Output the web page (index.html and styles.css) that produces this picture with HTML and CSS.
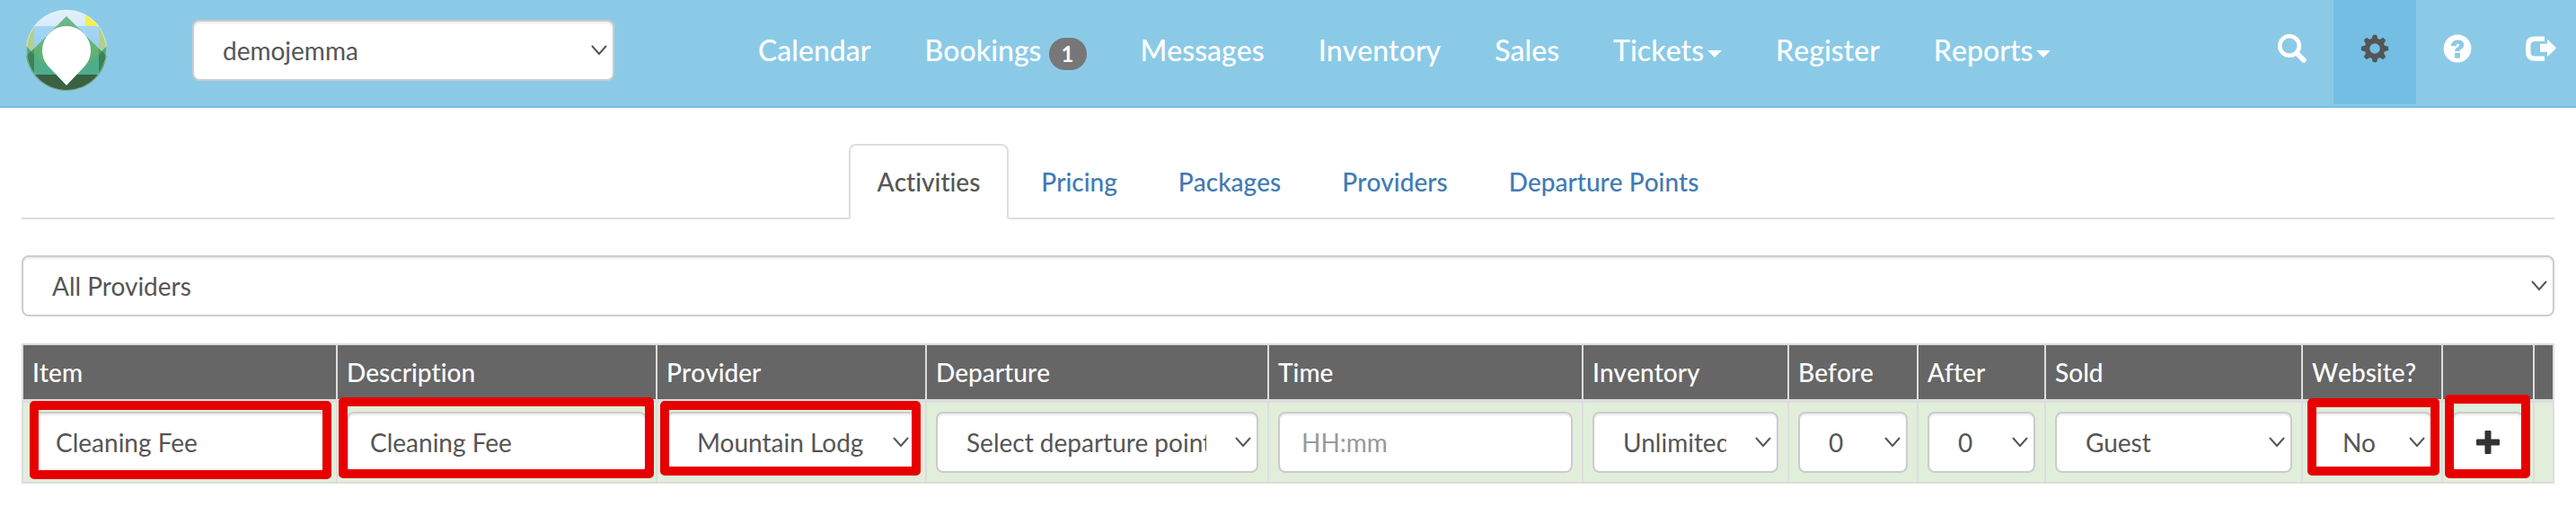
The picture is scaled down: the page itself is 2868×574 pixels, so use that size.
FILE: index.html
```html
<!DOCTYPE html>
<html lang="en">
<head>
<meta charset="utf-8">
<title>Activities</title>
<link rel="stylesheet" href="styles.css">
</head>
<body>
<header class="topbar">
  <a class="brand" href="#" aria-label="Home">
    <svg class="logo" viewBox="0 0 90 90" aria-hidden="true">
      <defs>
        <clipPath id="disc"><circle cx="45" cy="45" r="45"/></clipPath>
        <linearGradient id="sky" x1="0" y1="0" x2="0" y2="1"><stop offset="0" stop-color="#dff0fb"/><stop offset="1" stop-color="#b9ddf6"/></linearGradient>
        <linearGradient id="air" x1="0" y1="0" x2="0" y2="1"><stop offset="0" stop-color="#a6d6f6"/><stop offset="1" stop-color="#86c4ea"/></linearGradient>
        <linearGradient id="hill" x1="0" y1="0" x2="0" y2="1"><stop offset="0" stop-color="#6fb78d"/><stop offset="1" stop-color="#58ae66"/></linearGradient>
      </defs>
      <g clip-path="url(#disc)">
        <rect width="90" height="90" fill="url(#sky)"/>
        <path d="M66 0h24v18H66z" fill="#f6ec53"/>
        <path d="M0 18h90v54H0z" fill="#b3d08b"/>
        <path d="M9 18h72v54H9z" fill="url(#air)"/>
        <path d="M0 40l9 9v23H0zM90 40l-9 9v23h9z" fill="#4aa79a"/>
        <path d="M45 7L-6 58v14h102V58z" fill="url(#hill)"/>
        <path d="M0 52l9-9v6l-9 9zM90 52l-9-9v6l9 9z" fill="#4b9c62"/>
        <path d="M0 52l5-6 4 4v22H0zM90 52l-5-6-4 4v22h9z" fill="#3e8251"/>
        <path d="M9 49l23 23H9zM81 49L58 72h23z" fill="#50ad8c"/>
        <path d="M9 49l10 10 20 13H9zM81 49L71 59 51 72h30z" fill="#50ad8c"/>
        <path d="M0 72h90v18H0z" fill="#386241"/>
        <path d="M45 18a27 27 0 0 1 27 27c0 9-4 15-8 19L45 84 26 64c-4-4-8-10-8-19a27 27 0 0 1 27-27z" fill="#fff"/>
      </g>
      <circle cx="45" cy="45" r="44.5" fill="none" stroke="#fff" stroke-opacity=".4"/>
    </svg>
  </a>
  <select class="control account" aria-label="Account"><option>demojemma</option></select>
  <nav class="menu" aria-label="Main">
    <a href="#">Calendar</a>
    <a href="#">Bookings <span class="badge">1</span></a>
    <a href="#">Messages</a>
    <a href="#">Inventory</a>
    <a href="#">Sales</a>
    <a href="#">Tickets<span class="caret"></span></a>
    <a href="#">Register</a>
    <a href="#">Reports<span class="caret"></span></a>
  </nav>
  <nav class="tools" aria-label="Tools">
    <a href="#" aria-label="Search"><svg class="icon" viewBox="0 0 32 32" aria-hidden="true"><circle cx="13" cy="13" r="10.8" fill="none" stroke="currentColor" stroke-width="4.6"/><path d="M21.5 21.5l7.5 7.5" stroke="currentColor" stroke-width="5.6" stroke-linecap="round"/></svg></a>
    <a class="current" href="#" aria-label="Settings"><svg class="icon" viewBox="0 0 32 32" aria-hidden="true"><circle cx="16" cy="16" r="8.6" fill="none" stroke="currentColor" stroke-width="5.6"/><g fill="currentColor"><path id="tooth" d="M12.4 6l1.2-4.2q.3-1 1.2-1h2.4q.9 0 1.2 1L19.6 6z"/><use href="#tooth" transform="rotate(45 16 16)"/><use href="#tooth" transform="rotate(90 16 16)"/><use href="#tooth" transform="rotate(135 16 16)"/><use href="#tooth" transform="rotate(180 16 16)"/><use href="#tooth" transform="rotate(225 16 16)"/><use href="#tooth" transform="rotate(270 16 16)"/><use href="#tooth" transform="rotate(315 16 16)"/></g></svg></a>
    <a href="#" aria-label="Help"><svg class="icon" viewBox="0 0 32 32" aria-hidden="true"><path fill="currentColor" fill-rule="evenodd" d="M16 .6a15.4 15.4 0 1 1 0 30.8a15.4 15.4 0 0 1 0-30.8zM13.1 21.4v4.800q0 .6.600.6h4.600q.6 0 .6-.6v-4.800q0-.6-.6-.6h-4.600q-.6 0-.6.6zM9.400 13.300h4.700q.5 0 .5-.5c0-1.500.7-2 1.900-2 1.100 0 1.600.5 1.600 1.300 0 .9-.4 1.300-2 2.300-2.100 1.200-3 2.300-3 4.700h5.300c0-1.200.6-1.700 1.800-2.400 2-1.200 3-2.600 3-4.900 0-3.500-2.600-5.300-6.500-5.300-4.600 0-7.300 2.200-7.800 6.300q0 .5.5.5z"/></svg></a>
    <a href="#" aria-label="Log out"><svg class="icon wide" viewBox="0 0 34 32" aria-hidden="true"><path d="M21 5.300H10q-7.200 0-7.200 7.200v7.400q0 7.200 7.200 7.200h11" fill="none" stroke="currentColor" stroke-width="5.400"/><path d="M16 11.400q0-.6.600-.6H24V6.400q0-.9.700-.2l9 8.800q.5.500 0 1l-9 8.400q-.7.600-.7-.2v-4.500h-7.400q-.6 0-.6-.6z" fill="currentColor"/></svg></a>
  </nav>
</header>

<main class="page">
  <nav class="tabs" aria-label="Sections">
    <a class="active" href="#">Activities</a>
    <a href="#">Pricing</a>
    <a href="#">Packages</a>
    <a href="#">Providers</a>
    <a href="#">Departure Points</a>
  </nav>

  <select class="control filter" aria-label="Filter by provider"><option>All Providers</option></select>

  <table class="grid">
    <colgroup>
      <col class="c-item"><col class="c-desc"><col class="c-prov"><col class="c-dep"><col class="c-time"><col class="c-inv"><col class="c-before"><col class="c-after"><col class="c-sold"><col class="c-web"><col class="c-add"><col class="c-end">
    </colgroup>
    <thead>
      <tr>
        <th id="h-item">Item</th><th id="h-desc">Description</th><th id="h-prov">Provider</th><th id="h-dep">Departure</th><th id="h-time">Time</th><th id="h-inv">Inventory</th><th id="h-before">Before</th><th id="h-after">After</th><th id="h-sold">Sold</th><th id="h-web">Website?</th><th></th><th></th>
      </tr>
    </thead>
    <tbody>
      <tr>
        <td><div class="field"><input class="control" type="text" value="Cleaning Fee" aria-labelledby="h-item"><span class="mark mark-item"></span></div></td>
        <td><div class="field"><input class="control" type="text" value="Cleaning Fee" aria-labelledby="h-desc"><span class="mark mark-desc"></span></div></td>
        <td><div class="field"><select class="control" aria-labelledby="h-prov"><option>Mountain Lodge</option></select><span class="mark mark-prov"></span></div></td>
        <td><div class="field"><select class="control" aria-labelledby="h-dep"><option>Select departure point</option></select></div></td>
        <td><div class="field"><input class="control" type="text" placeholder="HH:mm" aria-labelledby="h-time"></div></td>
        <td><div class="field"><select class="control" aria-labelledby="h-inv"><option>Unlimited</option></select></div></td>
        <td><div class="field"><select class="control" aria-labelledby="h-before"><option>0</option></select></div></td>
        <td><div class="field"><select class="control" aria-labelledby="h-after"><option>0</option></select></div></td>
        <td><div class="field"><select class="control" aria-labelledby="h-sold"><option>Guest</option></select></div></td>
        <td><div class="field"><select class="control" aria-labelledby="h-web"><option>No</option></select><span class="mark mark-web"></span></div></td>
        <td><div class="field"><button class="control add" type="button" aria-label="Add"><svg class="plus" viewBox="0 0 26 26" aria-hidden="true"><path fill="currentColor" d="M10.500 0h5q1 0 1 1v8.500H25q1 0 1 1v5q0 1-1 1h-8.500V25q0 1-1 1h-5q-1 0-1-1v-8.500H1q-1 0-1-1v-5q0-1 1-1h8.500V1q0-1 1-1z"/></svg></button><span class="mark mark-add"></span></div></td>
        <td></td>
      </tr>
    </tbody>
  </table>
</main>
</body>
</html>
```

FILE: styles.css
```css
* {
  box-sizing: border-box;
}

body {
  margin: 0;
  background: #fff;
  color: #555;
  font-family: Lato, "Liberation Sans", sans-serif;
  font-size: 28px;
  font-kerning: none;
  font-variant-ligatures: none;
  font-weight: 500;
  line-height: 40px;
}

a {
  color: #417ab4;
  text-decoration: none;
}

/* Top bar */
.topbar {
  display: flex;
  align-items: flex-start;
  height: 120px;
  background: #8bcae7;
  border-bottom: 2px solid #74bee4;
}

.brand {
  padding: 11px 0 0 29px;
}

.logo {
  display: block;
  width: 90px;
  height: 90px;
}

.account {
  flex: none;
  margin: 22px 0 0 95px;
}

.menu {
  display: flex;
  margin-left: 130px;
}

.menu a {
  padding: 36px 30px;
  color: #fff;
  font-size: 32px;
  white-space: nowrap;
}

.badge {
  display: inline-block;
  padding: 6px 14px;
  border-radius: 20px;
  background: #777;
  font-size: 24px;
  font-weight: 700;
  line-height: 24px;
  vertical-align: middle;
}

.caret {
  display: inline-block;
  margin-left: 4px;
  border: 8px solid transparent;
  border-top-color: #fff;
  border-bottom: 0;
  vertical-align: middle;
}

.tools {
  display: flex;
  margin-left: auto;
}

.tools a {
  padding: 38px 30px 46px;
  color: #fff;
}

.tools a:last-child {
  padding-right: 22px;
}

.tools .current {
  background: #74bee4;
  color: #555;
}

.icon {
  display: block;
  width: 32px;
  height: 32px;
}

.icon.wide {
  width: 34px;
}

/* Page */
.page {
  padding: 40px 24px 36px;
}

.tabs {
  display: flex;
  justify-content: center;
  gap: 4px;
  border-bottom: 2px solid #ddd;
}

.tabs a {
  margin-bottom: -2px;
  padding: 20px 30px;
  border: 2px solid transparent;
  border-radius: 8px 8px 0 0;
}

.tabs .active {
  border-color: #ddd;
  border-bottom-color: #fff;
  background: #fff;
  color: #555;
}

/* Form controls */
.control {
  display: block;
  width: 100%;
  height: 68px;
  padding: 12px 24px;
  border: 2px solid #ccc;
  border-radius: 8px;
  background-color: #fff;
  box-shadow: inset 0 2px 2px rgba(0, 0, 0, 0.08);
  color: #555;
  font: inherit;
  font-kerning: normal;
  font-weight: 400;
}

.control::placeholder {
  color: #999;
  opacity: 1;
}

select.control {
  appearance: none;
  padding: 12px 56px 12px 32px;
  background-image: url("data:image/svg+xml,%3Csvg xmlns='http://www.w3.org/2000/svg' viewBox='0 0 18 12'%3E%3Cpath d='M1 1l8 9 8-9' fill='none' stroke='%23555' stroke-width='2'/%3E%3C/svg%3E");
  background-position: right 6px center;
  background-repeat: no-repeat;
  background-size: 18px 12px;
}

select.account {
  width: 470px;
}

.filter {
  margin: 40px 0 30px;
}

.add {
  display: flex;
  align-items: center;
  justify-content: center;
  padding: 0;
  color: #333;
}

.plus {
  width: 26px;
  height: 26px;
}

/* Activity table */
.grid {
  width: 100%;
  border: 2px solid #ddd;
  border-width: 2px 0 0 2px;
  border-spacing: 0;
  table-layout: fixed;
}

.c-item,
.c-time { width: 350px; }
.c-desc { width: 356px; }
.c-prov { width: 300px; }
.c-dep { width: 381px; }
.c-inv { width: 229px; }
.c-before { width: 144px; }
.c-after { width: 142px; }
.c-sold { width: 286px; }
.c-web { width: 156px; }
.c-add { width: 102px; }
.c-end { width: 22px; }

.grid th {
  padding: 10px;
  border-right: 2px solid #ddd;
  border-bottom: 4px solid #ddd;
  background: #666;
  color: #fff;
  font-weight: 500;
  text-align: left;
}

.grid td {
  padding: 10px;
  border-right: 2px solid #ddd;
  border-bottom: 2px solid #ddd;
  background: #e1eeda;
}

.field {
  position: relative;
}

/* Highlight frames drawn over the fields */
.mark {
  position: absolute;
  border: 10px solid #e60000;
  border-radius: 5px;
  pointer-events: none;
}

.mark-item { inset: -12px -5px -7px -3px; }
.mark-desc { inset: -16px -8px -6px -9px; }
.mark-prov { inset: -12px -5px -3px -7px; }
.mark-web { inset: -15px -8px -3px -5px; }
.mark-add { inset: -19px -7px -6px -8px; }
```
